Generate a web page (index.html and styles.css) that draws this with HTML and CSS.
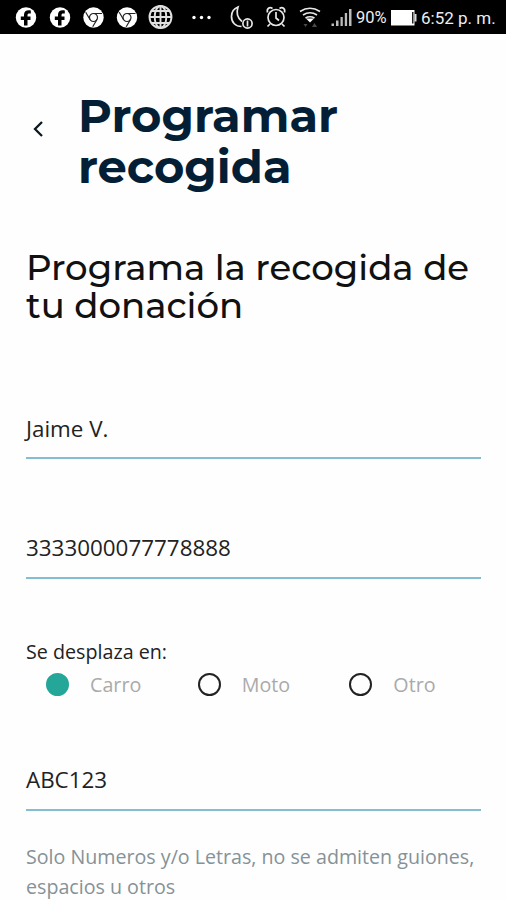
FILE: index.html
```html
<!DOCTYPE html>
<html lang="es">
<head>
<meta charset="utf-8">
<title>Programar recogida</title>
<link rel="stylesheet" href="styles.css">
</head>
<body>
<header class="status">
  <svg class="status-icons" width="354" height="34" viewBox="0 0 354 34" aria-hidden="true">
    <defs>
      <g id="facebook">
        <circle r="10.2" fill="#fff"/>
        <path d="M1.500 8V2.500H4.500V-.9H1.500v-1.200c0-1.400.5-2 1.800-2h1.500v-3C1-7.800-2-6.700-2-2.700V-.9h-3.200v3.400H-2V8z" fill="#000"/>
      </g>
      <g id="chrome">
        <circle r="10.200" fill="#fff"/>
        <circle r="4" fill="none" stroke="#222" stroke-width="1.200"/>
        <path d="M0-4H8.500M3.500 2L-.8 9.200M-3.500 2L-7.800-5.200" stroke="#222" stroke-width="1.200"/>
      </g>
    </defs>
    <use href="#facebook" x="26" y="17.500"/>
    <use href="#facebook" x="60" y="17.500"/>
    <use href="#chrome" x="93.500" y="17.500"/>
    <use href="#chrome" x="127" y="17.500"/>
    <g fill="none" stroke="#e0e0e0" stroke-width="1.900">
      <circle cx="160.500" cy="17" r="11"/>
      <ellipse cx="160.500" cy="17" rx="5.800" ry="11"/>
      <path d="M160.500 6v22M149.500 17h22M152 11h17M152 23h17"/>
    </g>
    <g fill="#fff"><circle cx="194" cy="17.500" r="1.700"/><circle cx="201.500" cy="17.500" r="1.700"/><circle cx="209" cy="17.500" r="1.700"/></g>
    <g fill="none" stroke="#e8e8e8" stroke-width="1.700">
      <path d="M241.500 26.500c-6 0-10-4-10-10 0-4.500 2.500-8 6.500-9.500-2 6-.5 11 4 14.500"/>
      <circle cx="247.500" cy="23.500" r="4.600"/><path d="M247.500 20.500v6"/>
      <circle cx="276" cy="17.500" r="8"/><path d="M276 12v6l3 2.500M270 24l-2.500 2.500M282 24l2.500 2.500M267.500 12.500c-1-4 2-6 5-4M284.500 12.500c1-4-2-6-5-4"/>
      <path d="M300 11.500q10-6.500 20 0M303 15q7-4.500 14 0M305.500 18q4.500-2.500 9 0"/>
    </g>
    <path d="M306 18.500h8l-4 4z" fill="#fff"/>
    <path d="M303.500 24h4l-2 3zM312 27l2.500-4 2.500 4z" fill="#4a4a4a"/>
    <path d="M331.500 23.500h2.500v2.500h-2.500zM336 20.500h2.500V26H336zM340.500 17h2.300v9h-2.300zM344.800 13h2.300v13h-2.300zM349 9h2.500v17H349z" fill="#bbb"/>
  </svg>
  <span class="percent">90%</span>
  <svg class="battery" width="28" height="34" viewBox="0 0 28 34" aria-hidden="true">
    <path d="M1 10h23.500v15.500H1z" fill="#fff"/><path d="M22 12h1.500v11.500H22z" fill="#222"/><path d="M24.500 14h2v7.500h-2z" fill="#ddd"/>
  </svg>
  <span class="clock">6:52 p. m.</span>
</header>
<main class="page">
  <div class="title-bar">
    <svg class="back" width="12" height="18" viewBox="0 0 12 18" role="img" aria-label="Volver"><path d="M10 2L3 9l7 7" fill="none" stroke="#0b1820" stroke-width="2.300"/></svg>
    <h1 class="title">Programar<br>recogida</h1>
  </div>
  <h2 class="subtitle">Programa la recogida de<br>tu donación</h2>
  <div class="field name">Jaime V.</div>
  <div class="field number">3333000077778888</div>
  <div class="legend">Se desplaza en:</div>
  <div class="options">
    <div class="option"><span class="radio selected"></span><span>Carro</span></div>
    <div class="option"><span class="radio"></span><span>Moto</span></div>
    <div class="option"><span class="radio"></span><span>Otro</span></div>
  </div>
  <div class="field plate">ABC123</div>
  <p class="hint">Solo Numeros y/o Letras, no se admiten guiones,<br>espacios u otros</p>
</main>
</body>
</html>
```
FILE: styles.css
```css
* { box-sizing: border-box; }
body {
  margin: 0;
  height: 900px;
  overflow: hidden;
  background: #fefefe;
  color: #222;
  font-family: "Open Sans", "Noto Sans", sans-serif;
}
.status {
  display: flex;
  height: 34px;
  background: #000;
  color: #eee;
  font: 400 17px/36px Roboto, sans-serif;
  white-space: nowrap;
}
.status svg { flex: none; display: block; }
.percent { width: 36px; padding-left: 2px; font-size: 16.5px; }
.clock { padding-left: 3px; }
.page { padding: 0 25px 0 26px; }
.title-bar { display: flex; padding-top: 56px; }
.back { flex: none; margin: 30px 34px 0 6px; }
.title {
  margin: 0;
  color: #041f35;
  font: 700 46.4px/51px Montserrat, Inter, sans-serif;
  white-space: nowrap;
}
.subtitle {
  margin: 57px 0 0;
  color: #111;
  font: 500 35.5px/38px Montserrat, Inter, sans-serif;
  white-space: nowrap;
}
.field {
  height: 60px;
  border-bottom: 2px solid #83bfd1;
  font-size: 22.4px;
  line-height: 58px;
}
.name { margin-top: 74px; line-height: 60px; }
.number { margin-top: 60px; }
.legend { margin-top: 59px; font-size: 19.7px; line-height: 28px; }
.options { display: flex; height: 36px; }
.option { display: flex; align-items: center; width: 152px; padding-left: 20px; color: #aaa; font-size: 19.7px; }
.radio { flex: none; width: 23px; height: 23px; margin-right: 21px; border: 2.500px solid #222; border-radius: 50%; }
.selected { background: #24a698; border-color: #24a698; }
.plate { margin-top: 49px; }
.hint { margin: 31px 0 0; color: #859297; font-size: 19.65px; line-height: 29.500px; white-space: nowrap; }
```
